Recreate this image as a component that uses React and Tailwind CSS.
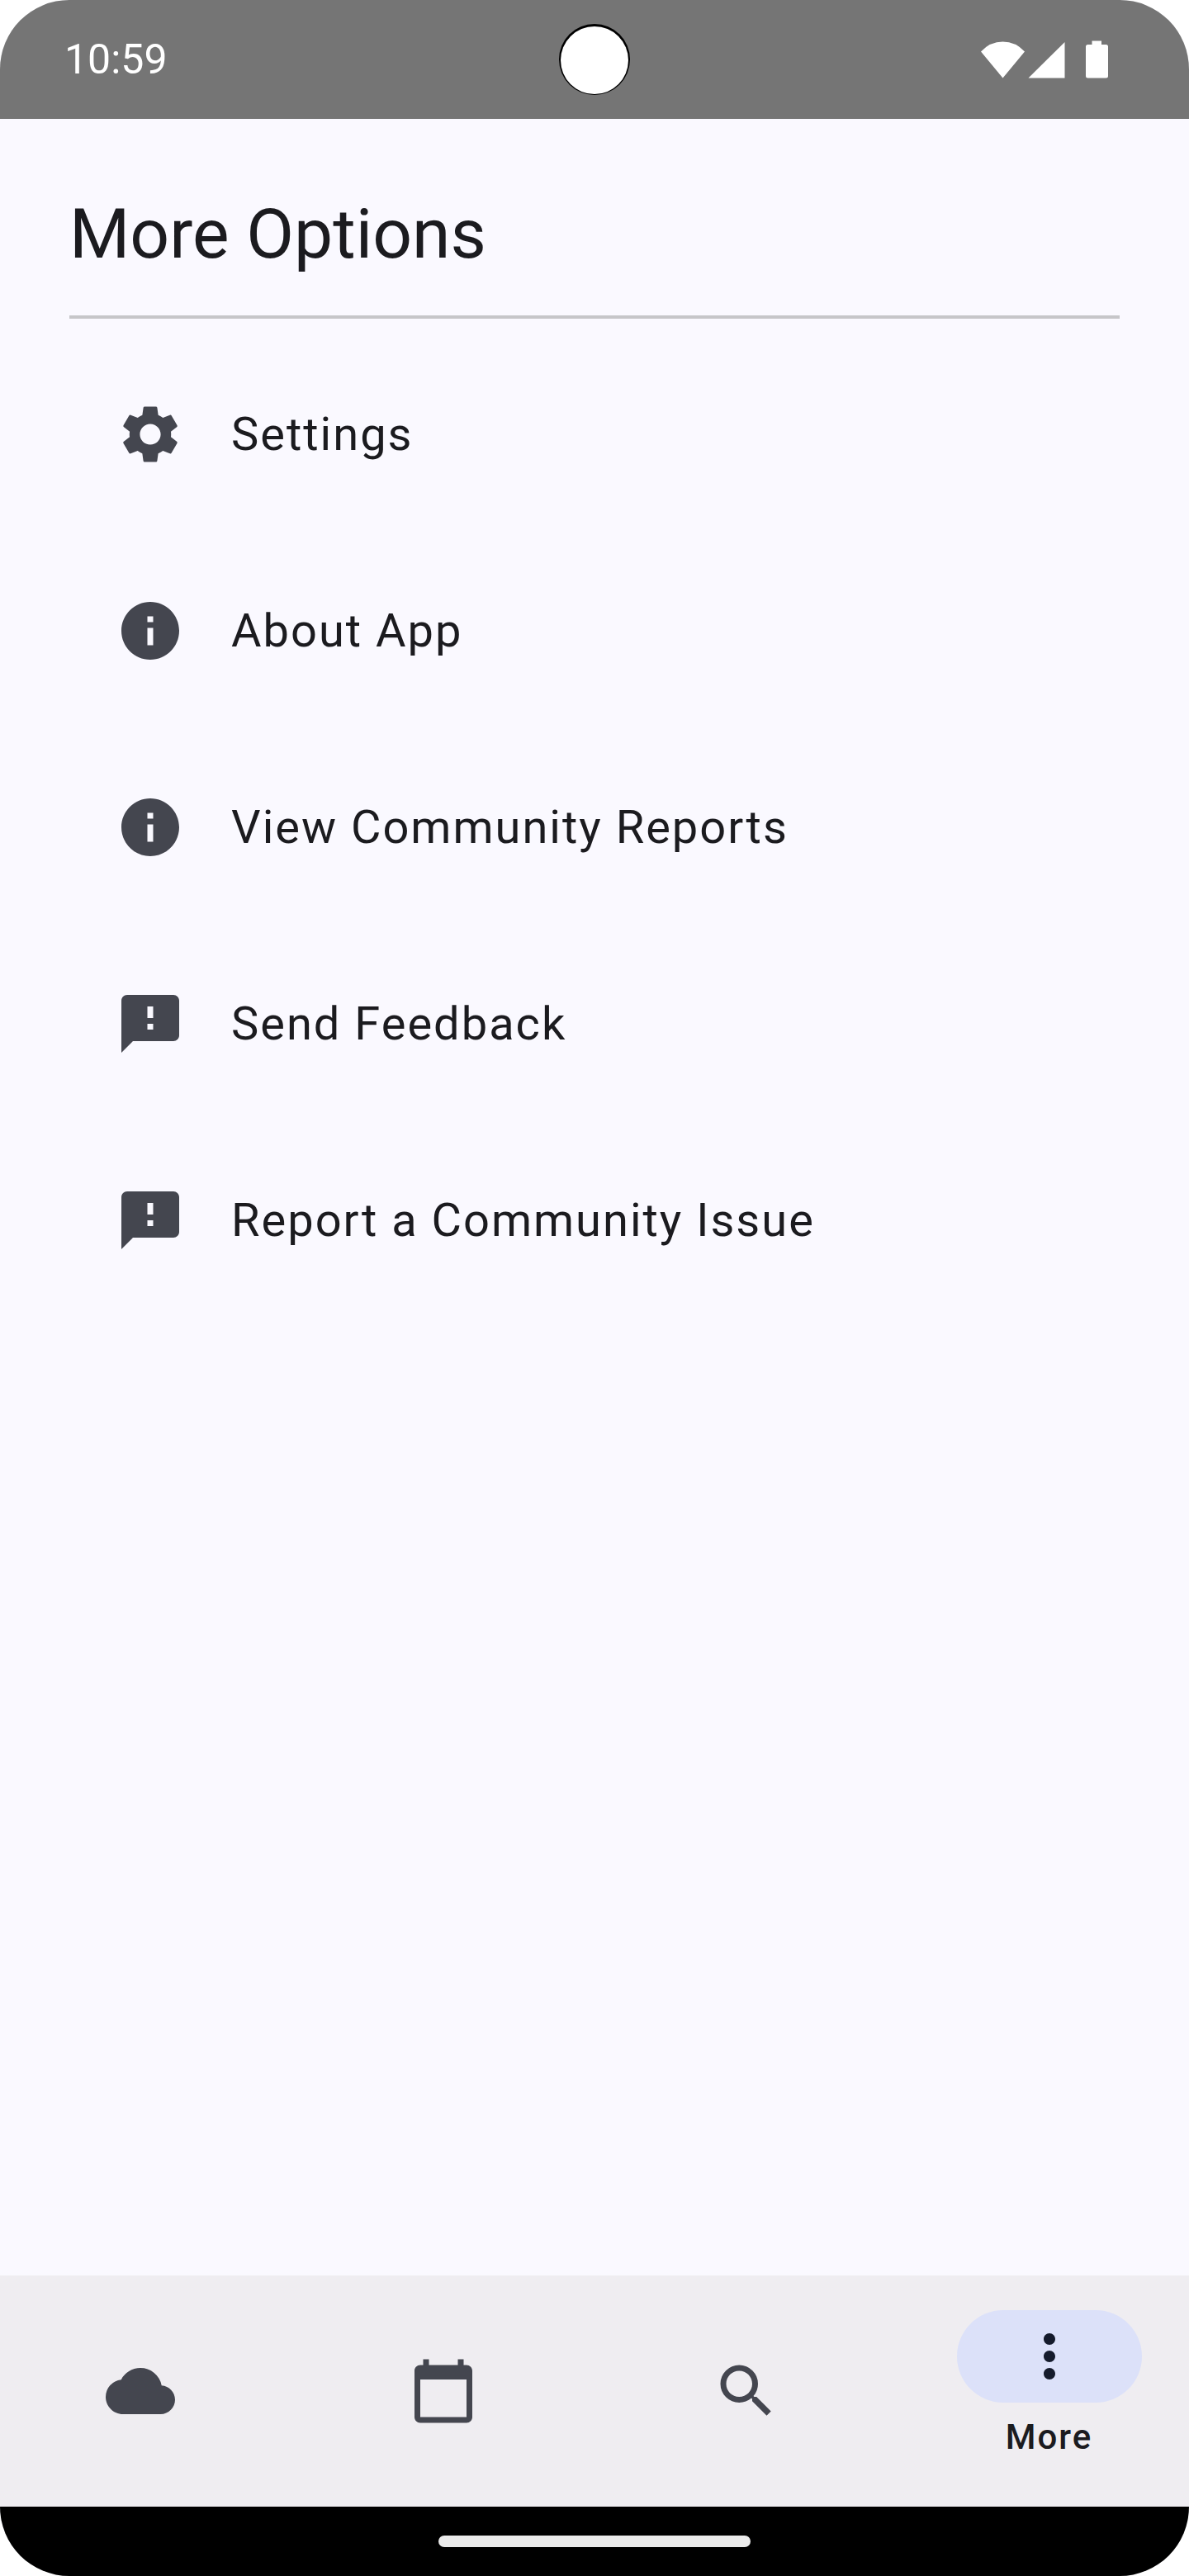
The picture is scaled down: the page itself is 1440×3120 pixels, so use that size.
import React from 'react';
import { MdSettings, MdInfo, MdFeedback, MdCloud, MdCalendarToday, MdSearch, MdMoreVert } from 'react-icons/md';

const options = [
  { label: 'Settings', icon: MdSettings },
  { label: 'About App', icon: MdInfo },
  { label: 'View Community Reports', icon: MdInfo },
  { label: 'Send Feedback', icon: MdFeedback },
  { label: 'Report a Community Issue', icon: MdFeedback },
];

const tabs = [
  { label: 'Weather', icon: MdCloud },
  { label: 'Calendar', icon: MdCalendarToday },
  { label: 'Search', icon: MdSearch },
  { label: 'More', icon: MdMoreVert },
];

const StatusBar = () => (
  <header className="relative flex h-36 items-center justify-between bg-[#757575] pl-[78px] pr-[98px] text-white">
    <span className="text-[50px] leading-[56px]">10:59</span>
    {/* camera cutout */}
    <div className="absolute inset-x-0 top-[29px] flex justify-center">
      <div className="size-[86px] rounded-full bg-black px-[2px] pt-[3px] pb-px">
        <div className="size-full rounded-full bg-white" />
      </div>
    </div>
    {/* wifi, signal, battery */}
    <svg viewBox="0 0 154 46" className="h-[46px] w-[154px]" fill="currentColor" aria-hidden="true">
      <path d="M0 13.5Q11 1.5 26.5 1.5T53 13.5L26.5 45.5Z" />
      <path d="M101.5 2V45.5H57.5Z" />
      <path d="M134.5 .5h11.5v4.5h5.500a2.5 2.5 0 0 1 2.5 2.5v35.5a2.5 2.5 0 0 1-2.5 2.5h-22a2.5 2.5 0 0 1-2.5-2.5v-35.5a2.5 2.5 0 0 1 2.5-2.5h5z" />
    </svg>
  </header>
);

const OptionRow = ({ label, icon: Icon }) => (
  <li>
    <button type="button" className="flex h-[196px] w-full items-center gap-14 px-14 text-left">
      <Icon className="size-[84px] shrink-0 text-[#44464f]" />
      <span className="text-[56px] leading-[84px] tracking-[2px]">{label}</span>
    </button>
  </li>
);

const NavItem = ({ label, icon: Icon, active }) => {
  if (!active) {
    return (
      <button type="button" aria-label={label} className="flex flex-1 items-center justify-center text-[#44464f]">
        <Icon className="size-[84px]" />
      </button>
    );
  }

  return (
    <button type="button" aria-current="page" className="flex flex-1 flex-col items-center gap-3.5 pt-[42px]">
      <span className="flex h-28 w-56 items-center justify-center rounded-full bg-[#dce1f9] text-[#151b2c]">
        <Icon className="size-[84px]" />
      </span>
      <span className="text-[42px] leading-[56px] font-medium tracking-[2px]">{label}</span>
    </button>
  );
};

const App = () => {
  return (
    <div className="min-h-screen bg-white font-[Roboto,sans-serif]">
      <div className="flex min-h-screen flex-col overflow-hidden rounded-[84px] bg-[#faf9ff] text-[#1b1b1f]">
        <StatusBar />

        <main className="flex-1 px-[84px] pt-[84px]">
          <h1 className="text-[84px] leading-[112px]">More Options</h1>
          <hr className="mt-[42px] border-t-4 border-[#c6c6c9]" />
          <ul className="mt-[42px] space-y-[42px]">
            {options.map((option) => (
              <OptionRow key={option.label} {...option} />
            ))}
          </ul>
        </main>

        <nav className="flex h-[280px] gap-7 bg-[#efedf1]">
          {tabs.map((tab) => (
            <NavItem key={tab.label} {...tab} active={tab.label === 'More'} />
          ))}
        </nav>

        <footer className="flex h-[84px] items-center justify-center bg-black">
          <div className="h-3.5 w-[378px] rounded-full bg-[#ebebeb]" />
        </footer>
      </div>
    </div>
  );
};

export default App;
